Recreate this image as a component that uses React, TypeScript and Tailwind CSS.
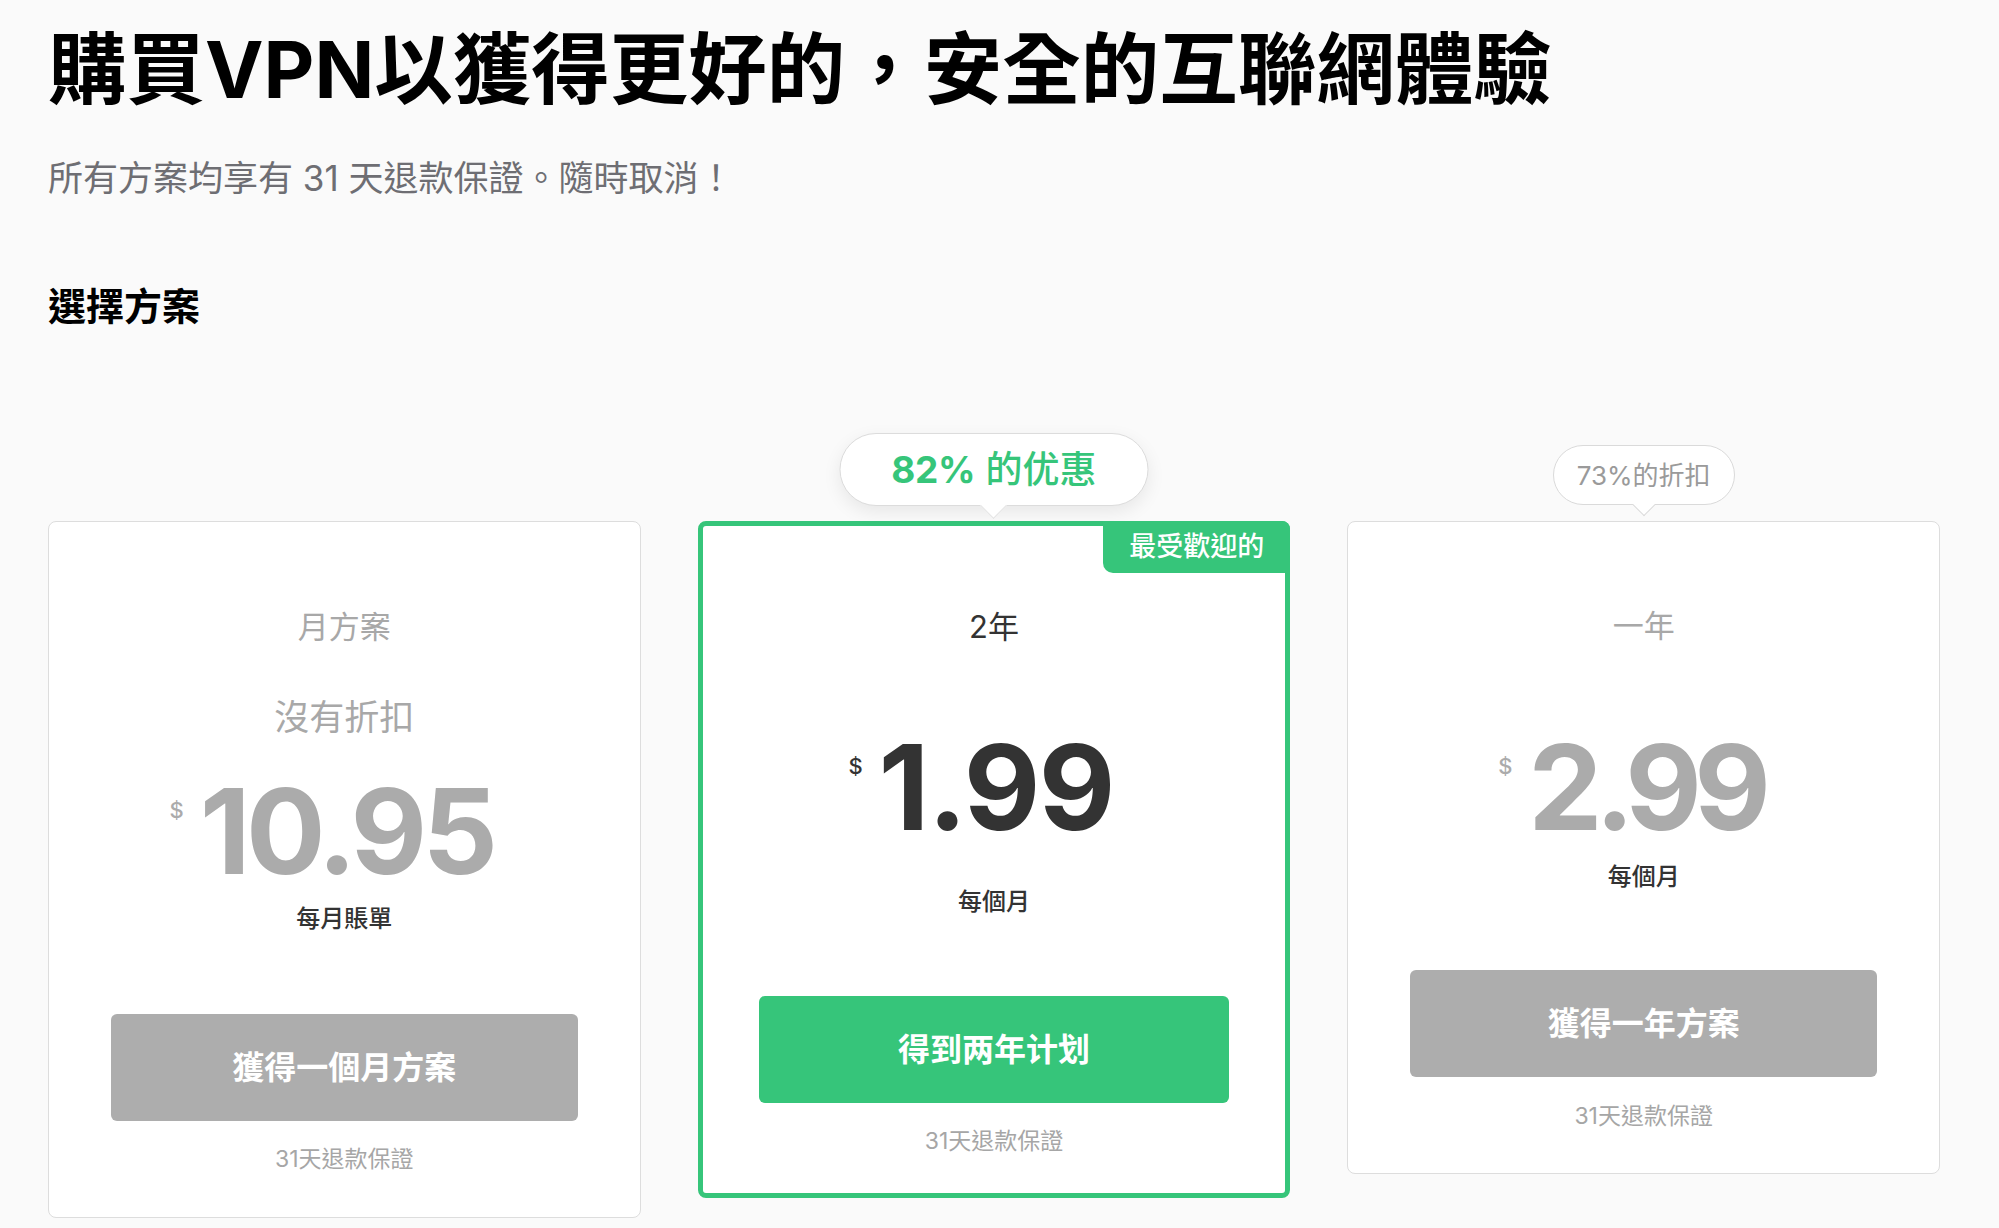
import React from "react";

type Plan = {
  id: string;
  label: string;
  labelClass: string;
  discount?: string;
  price: string;
  priceClass: string;
  numberClass: string;
  per: string;
  perClass: string;
  button: string;
  buttonClass: string;
  footerClass: string;
  cardClass: string;
};

const plans: Plan[] = [
  {
    id: "month",
    label: "月方案",
    labelClass: "text-[#a8a8a8]",
    discount: "沒有折扣",
    price: "10.95",
    priceClass: "mt-[33px] text-[#ababab]",
    numberClass: "tracking-[-0.04em]",
    per: "每月賬單",
    perClass: "mt-[13px]",
    button: "獲得一個月方案",
    buttonClass: "mt-[79px] bg-[#adadad]",
    footerClass: "mt-[23px]",
    cardClass: "border border-[#dddddd] px-[62px] pt-[85px] pb-[43px]",
  },
  {
    id: "2y",
    label: "2年",
    labelClass: "text-[#333333]",
    price: "1.99",
    priceClass: "mt-[81px] text-[#333333]",
    numberClass: "tracking-[-0.015em]",
    per: "每個月",
    perClass: "mt-[40px]",
    button: "得到两年计划",
    buttonClass: "mt-[78px] bg-[#36c57a]",
    footerClass: "mt-[23px]",
    cardClass: "border-[5px] border-[#36c57a] px-[56px] pt-[81px] pb-[37px]",
  },
  {
    id: "1y",
    label: "一年",
    labelClass: "text-[#a8a8a8]",
    price: "2.99",
    priceClass: "mt-[82px] text-[#ababab]",
    numberClass: "tracking-[-0.065em]",
    per: "每個月",
    perClass: "mt-[15px]",
    button: "獲得一年方案",
    buttonClass: "mt-[77px] bg-[#adadad]",
    footerClass: "mt-[24px]",
    cardClass: "border border-[#dddddd] px-[62px] pt-[84px] pb-[42px]",
  },
];

function PlanCard({ plan }: { plan: Plan }) {
  return (
    <div className={`relative flex flex-col items-center rounded-[8px] bg-white ${plan.cardClass}`}>
      {plan.id === "2y" && (
        <>
          {/* big offer bubble */}
          <div className="absolute bottom-[calc(100%+20px)] left-1/2 -translate-x-1/2">
            <div className="relative flex h-[73px] w-[309px] items-center justify-center rounded-full border border-[#dcdcdc] bg-white shadow-[0_6px_18px_rgba(0,0,0,0.08)]">
              <span className="text-[37px] leading-none text-[#36c57a]">
                <span className="font-bold tracking-[-0.01em]">82%</span> <span className="font-medium">的优惠</span>
              </span>
              <span className="absolute -bottom-[10px] left-1/2 h-[19px] w-[19px] -translate-x-1/2 rotate-45 border-r border-b border-[#e4e4e4] bg-white" />
            </div>
          </div>
          <div className="absolute -top-[5px] -right-[5px] flex h-[52px] w-[187px] items-center justify-center rounded-tr-[8px] rounded-bl-[10px] bg-[#36c57a] text-[27px] font-medium text-white">
            最受歡迎的
          </div>
        </>
      )}
      {plan.id === "1y" && (
        <div className="absolute bottom-[calc(100%+17px)] left-1/2 -translate-x-1/2">
          <div className="relative flex h-[60px] w-[182px] items-center justify-center rounded-full border border-[#dadada] bg-white text-[26px] text-[#9a9a9a]">
            73%的折扣
            <span className="absolute -bottom-[9px] left-1/2 h-[16px] w-[16px] -translate-x-1/2 rotate-45 border-r border-b border-[#dadada] bg-white" />
          </div>
        </div>
      )}

      <div className={`text-[31px] leading-[40px] ${plan.labelClass}`}>{plan.label}</div>
      {plan.discount && (
        <div className="mt-[48px] text-[35px] leading-[44px] text-[#a8a8a8]">{plan.discount}</div>
      )}

      <div className={`flex items-start pr-[26px] ${plan.priceClass}`}>
        <span className="mt-[27px] mr-[16px] text-[22px] leading-[22px] font-medium">$</span>
        <span className={`text-[118px] leading-none font-bold ${plan.numberClass}`}>{plan.price}</span>
      </div>

      <div className={`text-[24px] leading-[32px] font-medium text-[#333333] ${plan.perClass}`}>{plan.per}</div>

      <button
        className={`flex h-[107px] w-full items-center justify-center rounded-[6px] text-[32px] font-bold text-white ${plan.buttonClass}`}
      >
        {plan.button}
      </button>

      <div className={`text-[23px] leading-[30px] text-[#a6a6a6] ${plan.footerClass}`}>31天退款保證</div>
    </div>
  );
}

export default function App() {
  return (
    <div className="min-h-screen bg-[#fafafa] pl-[48px] pr-[59px] font-[Inter,'Noto_Sans_CJK_TC',sans-serif]">
      <h1 className="pt-[23px] text-[78.5px] leading-[94px] font-bold text-black">
        購買VPN以獲得更好的，安全的互聯網體驗
      </h1>
      <p className="mt-[39px] text-[35px] leading-[44px] text-[#6e6e73]">
        所有方案均享有 31 天退款保證。隨時取消！
      </p>
      <h2 className="mt-[82px] text-[38px] leading-[48px] font-bold text-black">選擇方案</h2>

      <div className="mt-[191px] grid grid-cols-3 items-start gap-[57px]">
        {plans.map((plan) => (
          <PlanCard key={plan.id} plan={plan} />
        ))}
      </div>
    </div>
  );
}
